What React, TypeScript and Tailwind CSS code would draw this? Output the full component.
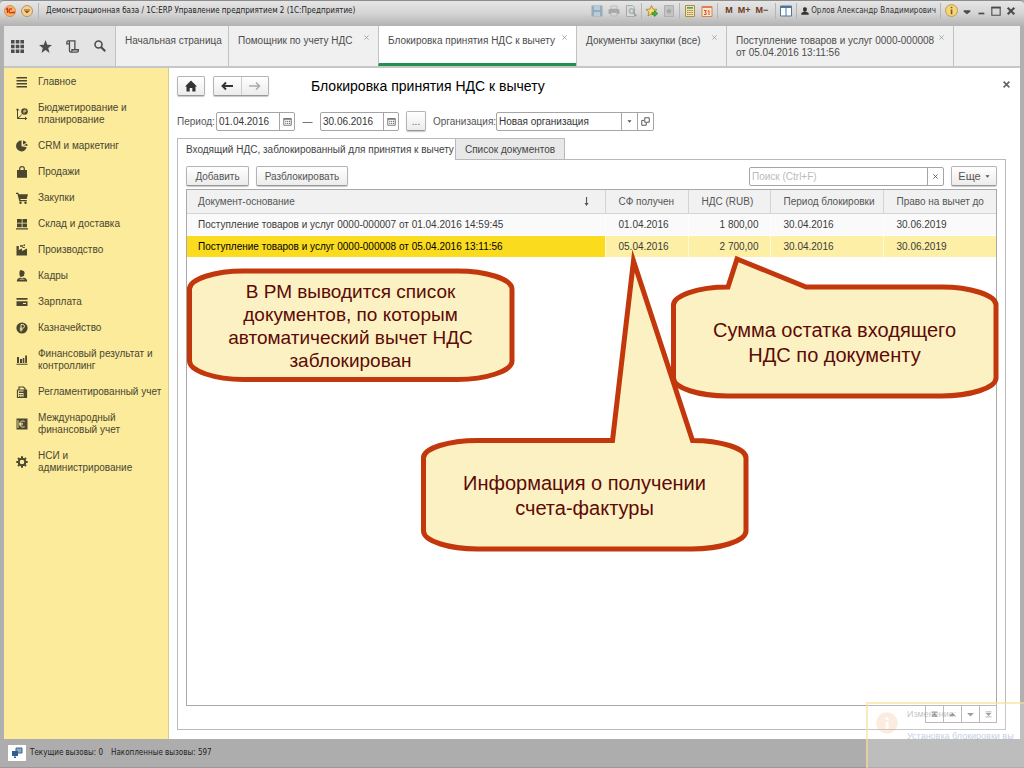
import React, { useState } from "react";

const Svg = ({
  children,
  size = 12,
  box = 12,
  className = "",
}: {
  children: React.ReactNode;
  size?: number;
  box?: number;
  className?: string;
}) => (
  <svg width={size} height={size} viewBox={`0 0 ${box} ${box}`} fill="currentColor" className={`shrink-0 ${className}`} aria-hidden="true">
    {children}
  </svg>
);

const sections = [
  {
    label: "Главное",
    icon: <path d="M.5 1h10.500v1.600H.5zM.5 4h10.500v1.600H.5zM.5 7h10.500v1.600H.5zM.5 10h10.500v1.500H.5z" />,
  },
  {
    label: "Бюджетирование и планирование",
    icon: (
      <>
        <path d="M1.500 1v9.500h9M0 2.500 1.500.8 3 2.500M9 9l1.700 1.500L9 12M1.500 10.500l4-3.500" fill="none" stroke="currentColor" />
        <circle cx="8.500" cy="3.500" r="3.300" />
        <path d="M8 5.500V2h1q1 .1 1 .9t-1 .8H7.300" fill="none" stroke="#fbeb9a" strokeWidth=".7" />
      </>
    ),
  },
  {
    label: "CRM и маркетинг",
    icon: <path d="M5.500.6v5.600l5.200 1A5.400 5.400 0 1 1 5.500.6zM7 .5a4.800 4.800 0 0 1 3.500 2.200L7 4.500zM7.500 5.300l3.500-1.500q.5 1 .4 2.200z" />,
  },
  {
    label: "Продажи",
    icon: (
      <>
        <path d="M1 4h10v7.800H1z" />
        <path d="M3.700 5.500V2.700q0-2 2.300-2t2.300 2v2.800" fill="none" stroke="currentColor" strokeWidth="1.200" />
      </>
    ),
  },
  {
    label: "Закупки",
    icon: (
      <>
        <path d="M0 .8h2.300L3 2.200h9L10.700 7H4.200l.3 1h6.300v1.200H3.300L1.500 2H0z" />
        <circle cx="4.500" cy="10.700" r="1.200" />
        <circle cx="9.500" cy="10.700" r="1.200" />
      </>
    ),
  },
  {
    label: "Склад и доставка",
    icon: <path d="M1 1h4.700v3.800H1zM6.500 1H11v3.800H6.500zM1 5.500h4.700v3.800H1zM6.500 5.500H11v3.800H6.500zM0 10.200h12v1.300H0z" />,
  },
  {
    label: "Производство",
    icon: <path d="M.5 2h2.300v4L6 4.500V7l5-2.500v7H.5zM4 1.300h3v1.500H4zM7.500.6H9V2H7.500zM6.500 3h2.300v1H6.500z" />,
  },
  {
    label: "Кадры",
    icon: (
      <>
        <path d="M6 .4q2.600 0 2.600 2.800T6 6.800 3.400 3.200 6 .4zM.8 11.500q0-3 3.200-4l2 1 2-1q3.200 1 3.200 4z" />
        <path d="M3.500 9.300h5" stroke="#fbeb9a" strokeWidth=".6" />
      </>
    ),
  },
  {
    label: "Зарплата",
    icon: <path d="M.5 2h11v1.700H.5zM.5 5.200h11V10H.5zM7 7v1h3V7z" fillRule="evenodd" />,
  },
  {
    label: "Казначейство",
    icon: (
      <>
        <circle cx="6" cy="6" r="5.600" />
        <path d="M5 9.500v-7h1.700q1.800.1 1.800 1.800T6.700 6.200H3.800M3.800 7.800h3" fill="none" stroke="#fbeb9a" />
      </>
    ),
  },
  {
    label: "Финансовый результат и контроллинг",
    icon: <path d="M1 3h2v6H1zM4 5h2v4H4zM6.700 4h1.600v5H6.700zM9.200 1.500H11V9H9.200zM.5 9.700h11v1H.5z" />,
  },
  {
    label: "Регламентированный учет",
    icon: (
      <>
        <path d="M3 4V1h4.500L9 2.500V4M1.500 4h9v7.500h-9z" fill="none" stroke="currentColor" strokeWidth="1.200" />
        <path d="M3 5.500h6V7H3zM3 8h1.500v1H3zM5.200 8h1.500v1H5.200zM7.500 8H9v1H7.500zM3 9.800h1.500v1H3zM5.200 9.800h1.500v1H5.200zM7.500 4H10v7H7.500z" />
      </>
    ),
  },
  {
    label: "Международный финансовый учет",
    icon: (
      <>
        <path d="M.5.500h11v11H.5z" />
        <path d="M8.700 3.500Q4.200 1.500 4.200 6t4.500 2.700M3 5.300h4M3 6.800h4M2 2v8" fill="none" stroke="#fbeb9a" strokeWidth=".9" />
      </>
    ),
  },
  {
    label: "НСИ и администрирование",
    icon: (
      <>
        <circle cx="6" cy="6" r="3.300" fill="none" stroke="currentColor" strokeWidth="2" />
        <path d="M6 .3v2M6 9.700v2M.3 6h2M9.700 6h2M2 2l1.400 1.400M8.600 8.600 10 10M10 2 8.600 3.400M3.400 8.600 2 10" stroke="currentColor" strokeWidth="2" />
      </>
    ),
  },
];

const windows = [
  { label: "Начальная страница", width: "w-[113px]", closable: false },
  { label: "Помощник по учету НДС", width: "w-[150px]", closable: true },
  { label: "Блокировка принятия НДС к вычету", width: "w-[198px]", closable: true },
  { label: "Документы закупки (все)", width: "w-[150px]", closable: true },
  { label: "Поступление товаров и услуг 0000-000008 от 05.04.2016 13:11:56", width: "w-[227px]", closable: true },
];

const rows = [
  {
    doc: "Поступление товаров и услуг 0000-000007 от 01.04.2016 14:59:45",
    received: "01.04.2016",
    vat: "1 800,00",
    period: "30.04.2016",
    until: "30.06.2019",
  },
  {
    doc: "Поступление товаров и услуг 0000-000008 от 05.04.2016 13:11:56",
    received: "05.04.2016",
    vat: "2 700,00",
    period: "30.04.2016",
    until: "30.06.2019",
  },
];

const raised =
  "rounded-[2px] border border-[#b4b4b4] border-b-[#989898] bg-linear-to-b from-white to-[#ececec] shadow-[0_1px_1px_#c8c8c8] flex items-center justify-center";

const Separator = () => <span className="h-4 w-px bg-[#b5b5b5]" />;

const ToolGroup = ({ children }: { children: React.ReactNode }) => <div className="flex items-center gap-[5px]">{children}</div>;

function TitleBar() {
  return (
    <header className="flex h-[26px] items-center rounded-t border-t border-[#8c8c8c] bg-linear-to-b from-[#e6e6e6] via-[#d4d4d4] to-[#b2b2b2] pr-2 pl-1 pb-[6px] font-['DejaVu_Sans_Condensed','DejaVu_Sans',sans-serif]">
      <button aria-label="1С" className="mr-[5px]">
        <Svg size={12}>
          <circle cx="6" cy="6" r="5.500" fill="#f7b45c" stroke="#b98446" strokeWidth=".7" />
          <path d="M2 4.500 3.500 3.500V8M8 4.200Q5 3 5 5.800T8 7.500h3" fill="none" stroke="#d8281c" strokeWidth="1.300" />
        </Svg>
      </button>
      <button aria-label="Меню" className="mr-[5px]">
        <Svg size={12}>
          <circle cx="6" cy="6" r="5.500" fill="#f8cf90" stroke="#a98355" strokeWidth=".8" />
          <path d="M3 4.500h6v1H3zM3.500 6h5L6 8.500z" fill="#7b5a30" />
        </Svg>
      </button>
      <Separator />
      <span className="ml-[7px] text-[8px] whitespace-nowrap text-[#222]">
        Демонстрационная база / 1С:ERP Управление предприятием 2 (1С:Предприятие)
      </span>
      <div className="ml-auto flex items-center gap-1 text-[#4a4a4a]">
        <ToolGroup>
          <button aria-label="Сохранить">
            <Svg><path d="M.5.500h11v11H.5z" fill="#93adbf" /><path d="M3 1h6v4H3zM3 7h6v4H3z" fill="#bccbd5" /></Svg>
          </button>
          <button aria-label="Печать">
            <Svg><path d="M3 1h6v3H3z" fill="#ddd" stroke="#aaa" strokeWidth=".6" /><rect x=".5" y="4" width="11" height="5" rx="1" fill="#a8a8a8" /><path d="M3 7.500h6V11H3z" fill="#d9d5cd" stroke="#aaa" strokeWidth=".6" /></Svg>
          </button>
          <button aria-label="Просмотр">
            <Svg><path d="M1.500.500h6l2 2v9h-8z" fill="#dadada" stroke="#a9a9a9" /><circle cx="6.500" cy="6" r="2.500" fill="#c5d3dc" stroke="#9aa5ac" /><path d="m8.500 8 3 3" stroke="#a39a8c" strokeWidth="1.500" /></Svg>
          </button>
        </ToolGroup>
        <Separator />
        <ToolGroup>
          <button aria-label="В избранное">
            <Svg><path d="M5.500.600 7 4.100l4 .3-3 2.600 1 3.900-3.500-2-3.500 2 1-3.900L0 4.400l4-.3z" fill="#f8dd74" stroke="#a87b28" strokeWidth=".8" /><path d="M6 7.200h2.500V5.500L12 8.500l-3.500 3V9.700H6z" fill="#45b431" stroke="#27781b" strokeWidth=".5" /></Svg>
          </button>
          <button aria-label="Избранное">
            <Svg><path d="M1.500.500h9v11h-9z" fill="#c4c4c4" stroke="#aeaeae" /><path d="m6 3 1 2 2 .2-1.500 1.500.5 2L6 7.700l-2 1 .5-2L3 5.200 5 5z" fill="#a4a4a4" /></Svg>
          </button>
        </ToolGroup>
        <Separator />
        <ToolGroup>
          <button aria-label="Калькулятор">
            <Svg><path d="M1.500.500h9v11h-9z" fill="#f0e3b4" stroke="#b18d42" /><path d="M3 2h6v1.700H3z" fill="#5aa05a" /><path d="M3 5.500h6M3 7.500h6M3 9.500h6" stroke="#a9843b" strokeDasharray="1.500 .7" /></Svg>
          </button>
          <button aria-label="Календарь">
            <Svg><path d="M1 1.500h10v10H1z" fill="#fbe5c5" stroke="#c98b54" /><path d="M1 1h10v2H1z" fill="#dc8150" /><path d="M3 5.500h2.300L4 7.500q2 0 1 2H3M8 10V5.500L6.700 6.500" stroke="#d4523c" fill="none" /></Svg>
          </button>
        </ToolGroup>
        <Separator />
        <div className="mx-[3px] flex gap-[5px] font-['Liberation_Sans',Arial,sans-serif] text-[9px] font-bold text-[#6b3a1c]">
          <button>M</button>
          <button>M+</button>
          <button>M−</button>
        </div>
        <Separator />
        <button aria-label="Панели">
          <Svg><path d="M.5 1h11v10H.5z" fill="#fff" stroke="#4b779f" /><path d="M.5 1h11v2H.5zM5.500 1h1v10h-1z" fill="#4b779f" /></Svg>
        </button>
        <Separator />
        <button className="flex items-center gap-[2px] text-[8px] whitespace-nowrap text-[#333]">
          <Svg size={8}><path d="M6 .500q3 0 3 3T6 7 3 3.500t3-3zM.5 11.500V9L4 7h4l3.500 2v2.500z" /></Svg>
          Орлов Александр Владимирович
        </button>
        <Separator />
        <ToolGroup>
          <button aria-label="Информация">
            <Svg size={13}><circle cx="6" cy="6" r="5.500" fill="#f6d57a" stroke="#bd923a" strokeWidth=".8" /><path d="M5.300 2.500h1.500V4H5.300zM5.300 5h1.500v4.500H5.300z" fill="#7f5a18" /></Svg>
          </button>
          <button aria-label="Ещё"><Svg size={8}><path d="M1 5h10v2H1zM1 7h10L6 11z" /></Svg></button>
          <button aria-label="Свернуть"><Svg size={10}><path d="M3 8h7v2H3z" /></Svg></button>
          <button aria-label="Развернуть"><Svg size={10}><path d="M1 1.500h10V11H1z" fill="none" stroke="currentColor" strokeWidth="1.300" /><path d="M.5 1h11v2H.5z" /></Svg></button>
          <button aria-label="Закрыть"><Svg size={10}><path d="m2 2 8 8M10 2l-8 8" stroke="currentColor" strokeWidth="2.500" /></Svg></button>
        </ToolGroup>
      </div>
    </header>
  );
}

function WindowTabs() {
  const [current, setCurrent] = useState(2);
  return (
    <div className="flex h-[42px] border-b-2 border-[#c6c6c6] bg-[#f0f0f0] text-[#4d4d4d]">
      <div className="flex w-[111px] shrink-0 items-center justify-between bg-[#e4e4e4] pr-[9px] pl-[7px]">
        <button aria-label="Функции"><Svg size={13}><path d="M0 0h3.300v3.300H0zM4.400 0h3.300v3.300H4.400zM8.700 0H12v3.300H8.700zM0 4.400h3.300v3.300H0zM4.400 4.400h3.300v3.300H4.400zM8.700 4.400H12v3.300H8.700zM0 8.700h3.300V12H0zM4.400 8.700h3.300V12H4.400zM8.700 8.700H12V12H8.700z" /></Svg></button>
        <button aria-label="Избранное"><Svg size={13}><path d="m6 0 1.600 4.300 4.400.2-3.500 2.800L9.700 12 6 9.200 2.300 12l1.200-4.700L0 4.500l4.400-.2z" /></Svg></button>
        <button aria-label="История"><Svg size={13}><path d="M3.200 3.500H.8V2q0-1.200 1.200-1.200h6.200V9M2 .8q1.200 0 1.200 1.200v8q0 1.200 1.200 1.200h5.800q1.200 0 1.200-1.200V9H5.500v1q0 1.200-1.100 1.200" fill="none" stroke="currentColor" strokeWidth="1.200" /></Svg></button>
        <button aria-label="Поиск"><Svg size={12}><circle cx="4.500" cy="4.500" r="3.500" fill="none" stroke="currentColor" strokeWidth="1.600" /><path d="m7 7 4.200 4.200" stroke="currentColor" strokeWidth="2.200" /></Svg></button>
      </div>
      {windows.map((w, i) => (
        <div
          key={w.label}
          className={`${w.width} flex shrink-0 justify-between border-l border-[#c2c2c2] pl-[9px] ${i === current ? "border-b-[3px] border-b-[#1e9150] bg-white" : ""}`}
        >
          <button onClick={() => setCurrent(i)} className="flex flex-1 items-start pt-[9px] text-left text-[10px] leading-[12px]">
            {w.label}
          </button>
          {w.closable && (
            <button aria-label={`Закрыть ${w.label}`} className="mt-2 mr-[9px] h-[6px] text-[#999]">
              <Svg size={5}><path d="m1 1 10 10M11 1 1 11" stroke="currentColor" strokeWidth="2" /></Svg>
            </button>
          )}
        </div>
      ))}
      <div className="flex-1 border-l border-[#c2c2c2]" />
    </div>
  );
}

function DateField({ id, value, label }: { id: string; value: string; label: string }) {
  return (
    <div className="flex h-[19px] w-[79px] rounded-[2px] border border-[#a5a5a5] bg-white">
      <input id={id} aria-label={label} defaultValue={value} className="w-[62px] pl-[2px] text-[10px] text-[#333] outline-none" />
      <button aria-label="Выбрать дату" className="flex flex-1 items-center justify-center border-l border-[#a5a5a5] text-[#777]">
        <Svg size={9}>
          <path d="M1 2h10v9H1z" fill="none" stroke="currentColor" strokeWidth="1.300" />
          <path d="M1 1.500h10v2H1zM3 5h1.500v1.500H3zM5.500 5H7v1.500H5.500zM8 5h1.500v1.500H8zM3 7.700h1.500v1.500H3zM5.500 7.700H7v1.500H5.500zM8 7.700h1.500v1.500H8z" />
        </Svg>
      </button>
    </div>
  );
}

function BlockedTable() {
  const th = "border-l border-[#d4d4d4] pl-[13px] text-left font-normal first:border-l-0 first:pl-[11px]";
  return (
    <table className="w-full table-fixed border-collapse text-[10px] text-[#3a3a3a]">
      <colgroup>
        <col />
        <col className="w-[83px]" />
        <col className="w-[82px]" />
        <col className="w-[113px]" />
        <col className="w-[113px]" />
      </colgroup>
      <thead>
        <tr className="h-[23px] border-b border-[#d4d4d4] bg-[#f1f1f1] text-[#555]">
          <th className={th}>
            <div className="flex items-center justify-between pr-[14px]">
              Документ-основание
              <Svg size={9}><path d="M5.300 0h1.500v8h2L6 12 3.300 8h2z" /></Svg>
            </div>
          </th>
          <th className={th}>СФ получен</th>
          <th className={th}>НДС (RUB)</th>
          <th className={th}>Период блокировки</th>
          <th className={th}>Право на вычет до</th>
        </tr>
      </thead>
      <tbody>
        {rows.map((r, i) => (
          <tr key={r.doc} className={`h-[22px] border-b border-white ${i === 1 ? "bg-[#fdf0a6]" : "bg-[#fafafa]"}`}>
            <td className={`pl-[11px] ${i === 1 ? "bg-[#fadb1e] text-black" : ""}`}>{r.doc}</td>
            <td className="border-l border-white/60 pl-[13px]">{r.received}</td>
            <td className="border-l border-white/60 pr-[11px] text-right">{r.vat}</td>
            <td className="border-l border-white/60 pl-[13px]">{r.period}</td>
            <td className="border-l border-white/60 pl-[13px]">{r.until}</td>
          </tr>
        ))}
      </tbody>
    </table>
  );
}

const Bubble = ({ className, height, d, children }: { className: string; height: number; d: string; children: React.ReactNode }) => (
  <div className={`absolute flex w-[327px] flex-col items-center justify-end text-center text-[#5c0a05] ${className}`}>
    <svg width="327" height={height} viewBox={`0 0 327 ${height}`} className="absolute top-0 left-0 overflow-visible" aria-hidden="true">
      <path d={d} fill="#fcf1c3" stroke="#c2370c" strokeWidth="5" strokeMiterlimit="12" />
    </svg>
    <p className="relative flex h-[112px] items-center">
      <span>{children}</span>
    </p>
  </div>
);

function Callouts() {
  return (
    <>
      <Bubble
        className="top-[268px] left-[187px] h-[114px] text-[19px] leading-[23px]"
        height={114}
        d="M56.500 3H270.500C299 3 325 11 325 21V93C325 103 299 111.500 270.500 111.500H56.500C28 111.500 2.500 103 2.500 93V21C2.500 11 28 3 56.500 3Z"
      >
        В РМ выводится список
        <br />
        документов, по которым
        <br />
        автоматический вычет НДС
        <br />
        заблокирован
      </Bubble>
      <Bubble
        className="top-[258px] left-[671px] h-[141px] text-[20px] leading-[25px]"
        height={141}
        d="M57 29 66 1 135 29H270.500C299 29 325 37 325 47V120C325 130 299 138 270.500 138H56.500C28 138 2.500 130 2.500 120V47C2.500 38 26 29 57 29Z"
      >
        Сумма остатка входящего
        <br />
        НДС по документу
      </Bubble>
      <Bubble
        className="top-[258px] left-[421px] h-[294px] text-[20px] leading-[25px]"
        height={294}
        d="M191.500 182.500 212.500 3 271.500 182.500C299 182.500 325 190 325 200V273C325 283 299 291 270.500 291H56.500C28 291 2.500 283 2.500 273V200C2.500 190 28 182.500 56.500 182.500Z"
      >
        Информация о получении
        <br />
        счета-фактуры
      </Bubble>
    </>
  );
}

export default function App() {
  return (
    <div className="relative flex min-h-screen flex-col overflow-hidden bg-[#b0b0b0] font-['Liberation_Sans',Arial,sans-serif]">
      <TitleBar />
      <div className="mx-1 flex flex-1 flex-col">
        <WindowTabs />
        <div className="flex flex-1">
          <nav className="w-[165px] shrink-0 border-r border-[#d8cc8c] bg-[#fbeb9a] pt-px text-[#4a4632]">
            {sections.map((s) => (
              <a key={s.label} href="#" className="flex items-center gap-[10px] py-[7px] pr-[6px] pl-3 text-[10px] leading-[12px]">
                <Svg>{s.icon}</Svg>
                <span className={s.label === "Регламентированный учет" ? "whitespace-nowrap" : "max-w-[116px]"}>{s.label}</span>
              </a>
            ))}
          </nav>

          <main className="flex min-w-0 flex-1 flex-col bg-white px-2 pt-2 pb-[9px] text-[10px] text-[#555]">
            <div className="flex h-5 items-center">
              <button aria-label="Домой" className={`${raised} h-5 w-[28px] text-[#333]`}>
                <Svg><path d="M6 .500 12 6.500h-1.500V11.500H7.300V8H4.700v3.500H1.500v-5H0z" /></Svg>
              </button>
              <div className={`${raised} ml-2 h-5 w-[56px]`}>
                <button aria-label="Назад" className="flex h-full flex-1 items-center justify-center border-r border-[#ccc] text-[#333]">
                  <Svg><path d="M12 6H2M5 2.500 1.500 6 5 9.500" fill="none" stroke="currentColor" strokeWidth="1.900" /></Svg>
                </button>
                <button aria-label="Вперед" className="flex h-full flex-1 items-center justify-center text-[#aaa]">
                  <Svg><path d="M0 6h10M7 2.500 10.500 6 7 9.500" fill="none" stroke="currentColor" strokeWidth="1.500" /></Svg>
                </button>
              </div>
              <h1 className="ml-[42px] text-[14px] text-black">Блокировка принятия НДС к вычету</h1>
              <button aria-label="Закрыть форму" className="mr-[2px] ml-auto pb-1 text-[#666]">
                <Svg size={7}><path d="m1 1 10 10M11 1 1 11" stroke="currentColor" strokeWidth="2.800" /></Svg>
              </button>
            </div>

            <div className="mt-[15px] flex h-5 items-center">
              <label htmlFor="from" className="w-[39px] whitespace-nowrap">Период:</label>
              <DateField id="from" value="01.04.2016" label="Начало периода" />
              <span className="w-[25px] text-center">—</span>
              <DateField id="to" value="30.06.2016" label="Конец периода" />
              <button aria-label="Выбрать период" className={`${raised} ml-[7px] h-5 w-5`}>...</button>
              <label htmlFor="org" className="ml-[7px] w-[63px] whitespace-nowrap">Организация:</label>
              <div className="flex h-[19px] w-[158px] rounded-[2px] border border-[#a5a5a5] bg-white">
                <input id="org" defaultValue="Новая организация" className="min-w-0 flex-1 pl-[2px] text-[#333] outline-none" />
                <button aria-label="Список организаций" className="flex w-4 items-center justify-center border-l border-[#a5a5a5]">
                  <Svg size={5}><path d="M1 3h10L6 9z" /></Svg>
                </button>
                <button aria-label="Открыть организацию" className="flex w-4 items-center justify-center border-l border-[#a5a5a5]">
                  <Svg size={9}><path d="M5 1h6v6H5zM4 4.500H1V11h6V8" fill="none" stroke="currentColor" strokeWidth="1.300" /></Svg>
                </button>
              </div>
            </div>

            <div role="tablist" className="mt-[7px] flex h-[21px]">
              <button role="tab" aria-selected="true" className="relative z-10 -mb-px w-[279px] border border-b-0 border-[#b9b9b9] bg-white pl-2 text-left whitespace-nowrap text-[#444]">
                Входящий НДС, заблокированный для принятия к вычету
              </button>
              <button role="tab" aria-selected="false" className="w-[109px] border border-b-0 border-l-0 border-[#b9b9b9] bg-[#e8e8e8] text-[#444]">
                Список документов
              </button>
            </div>

            <div className="mr-[6px] flex flex-1 flex-col border border-[#b9b9b9] px-2 pt-[6px] pb-[6px]">
              <div className="flex h-5 items-center">
                <button className={`${raised} h-5 w-[63px]`}>Добавить</button>
                <button className={`${raised} ml-[7px] h-5 w-[92px]`}>Разблокировать</button>
                <div className="ml-auto flex h-[19px] w-[195px] rounded-[2px] border border-[#a5a5a5]">
                  <input aria-label="Поиск" placeholder="Поиск (Ctrl+F)" className="min-w-0 flex-1 pl-[2px] outline-none placeholder:text-[#bbb]" />
                  <button aria-label="Очистить" className="flex w-4 items-center justify-center border-l border-[#a5a5a5]">
                    <Svg size={5}><path d="m1 1 10 10M11 1 1 11" stroke="currentColor" strokeWidth="2" /></Svg>
                  </button>
                </div>
                <button className={`${raised} ml-[7px] h-5 w-[46px] gap-1 text-[11px]`}>
                  Еще
                  <Svg size={5}><path d="M1 3h10L6 9z" /></Svg>
                </button>
              </div>
              <div className="mt-[3px] flex-1 border border-[#a9a9a9]">
                <BlockedTable />
              </div>
              <div className="flex h-[17px] justify-end text-[#888]">
                {["M2 2h8v1.500H2zM6 3.500l4 4H2zM2 8h8v1H2z", "M6 3.500l4.500 4.500h-9z", "M1.500 4h9L6 8.500z", "M2 2h8v1H2zM2 4h8L6 8zM2 8.500h8v1H2z"].map((d, i) => (
                  <button key={d} aria-label={["В начало", "Вверх", "Вниз", "В конец"][i]} className="flex w-[18px] items-center justify-center border border-t-0 border-r-0 border-[#a9a9a9] last:border-r">
                    <Svg size={9}><path d={d} /></Svg>
                  </button>
                ))}
              </div>
            </div>
          </main>
        </div>
      </div>

      <footer className="flex h-[29px] items-center border-b border-[#999] bg-[#adadad] px-2 font-['DejaVu_Sans_Condensed','DejaVu_Sans',sans-serif] text-[8px] text-[#222]">
        <span className="mr-1 flex h-4 w-[18px] items-center justify-center bg-white">
          <Svg><path d="M5 1h6v5H5z" fill="#88a9c4" stroke="#3d6488" /><path d="M1 4h6v5H1zM3 9.500h2v1.500H3z" fill="#2f5f8d" /></Svg>
        </span>
        <span className="mr-2">Текущие вызовы: 0</span>
        <span>Накопленные вызовы: 597</span>
      </footer>

      <Callouts />

      {/* fading notification */}
      <aside className="absolute right-0 bottom-0 flex h-[66px] w-[158px] items-start overflow-hidden border-t-2 border-l-2 border-[#f6dc90]/60 bg-white/20 text-[9px] whitespace-nowrap">
        <Svg size={22} className="mt-2 mr-[9px] ml-2 text-[#f3b480]/25">
          <circle cx="6" cy="6" r="5.800" />
          <path d="M5.300 3h1.500v1.300H5.300zM5.300 5.300h1.500v4H5.300z" fill="#fff" />
        </Svg>
        <div className="pt-1">
          <p className="leading-[12px] text-[#888]/50">Изменение:</p>
          <a href="#" className="mt-[10px] block leading-[12px] text-[#7f9dbf]/50">Установка блокировки вы</a>
        </div>
      </aside>
    </div>
  );
}
